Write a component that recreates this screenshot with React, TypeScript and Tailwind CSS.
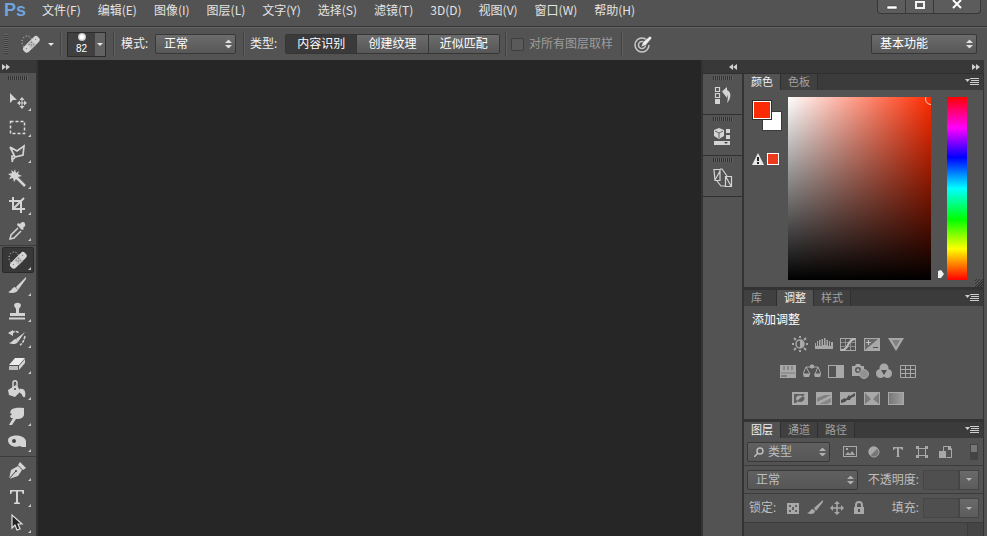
import React, { useState } from 'react';

const menus = ['文件(F)', '编辑(E)', '图像(I)', '图层(L)', '文字(Y)', '选择(S)', '滤镜(T)', '3D(D)', '视图(V)', '窗口(W)', '帮助(H)'];

type Tool = { name: string; icon: React.ReactNode };

// Every tool glyph is drawn on a 20x20 grid
const bandage = (
  <>
    <ellipse cx="7" cy="8" rx="5" ry="6" fill="none" stroke="#e0e0e0" strokeDasharray="1 2" />
    <g transform="rotate(-45 11 10)">
      <rect x="1" y="7" width="20" height="7" rx="3" fill="#d4d4d4" stroke="none" />
      <rect x="8" y="7" width="6" height="7" fill="#bdbdbd" stroke="none" />
      <path d="M9 9h1M12 9h1M10 11h1M12 12h1M4 10h1M17 10h1" stroke="#666" strokeWidth="1" />
    </g>
  </>
);

const brush = (
  <>
    <path d="M19 1 9 11l2 3L19 3z" />
    <path d="M8 11c-3 0-3 4-7 5 3 2 9 1 10-2z" />
  </>
);

const toolGroups: Tool[][] = [
  [
    { name: '移动工具', icon: <><path d="M3 2v10l3-3h4z" /><path d="M15 6l-2.500 3h5zM15 18l-2.500-3h5zM10 12l3-2.500v5zM20 12l-3-2.500v5z" /><path d="M15 8v8M11 12h8" stroke="#d4d4d4" /></> },
    { name: '矩形选框工具', icon: <rect x="3.500" y="4.500" width="14" height="12" fill="none" stroke="#dcdcdc" strokeWidth="1.500" strokeDasharray="3 2" /> },
    { name: '多边形套索工具', icon: <path d="M3 4l7 4 7-5-1 9-8 2-5-10M8 13l-3 0 0 3 3-1M6 16l-1 3" fill="none" stroke="#d4d4d4" strokeWidth="1.700" /> },
    { name: '魔棒工具', icon: <><path d="M8 0l1 4 3-2-1 3 4 2-4 1 1 4-3-2-2 3-1-4-4 1 2-3-3-2 4-1-1-3 3 2z" /><path d="M10 9l8 8" stroke="#d4d4d4" strokeWidth="2.500" /></> },
    { name: '裁剪工具', icon: <path d="M6 2v12h12M2 6h12v12M7 13l10-10" fill="none" stroke="#d4d4d4" strokeWidth="2" /> },
    { name: '吸管工具', icon: <><path d="M13 3c2-3 5-2 5 0 1 2-1 3-2 4l1 1-2 1-5-5 1-2z" /><path d="M11 7l-7 7-1 4 4-1 7-7" fill="none" stroke="#d4d4d4" strokeWidth="1.500" /></> },
  ],
  [
    { name: '污点修复画笔工具', icon: bandage },
    { name: '画笔工具', icon: brush },
    { name: '仿制图章工具', icon: <><path d="M7 3c1-3 6-3 7 0 0 2-2 3-2 4v4h6v3H3v-3h6V7C9 6 7 5 7 3z" /><path d="M2 15.500h16v2H2z" /></> },
    { name: '历史记录画笔工具', icon: <><path d="M18 4L9 11l2 3z" /><path d="M9 11c-3 0-3 3-7 4 3 2 8 1 9-1z" /><path d="M5 5c2-2 5-2 7 0M18 8c-1 5-3 8-5 9" fill="none" stroke="#d4d4d4" strokeWidth="1.500" strokeDasharray="3 1" /><path d="M1 5l5-3v6z" /></> },
    { name: '橡皮擦工具', icon: <><path d="M2 11l6-7h10l-6 7z" fill="#ececec" /><path d="M2 12h9v4H2z" fill="#bdbdbd" /><path d="M12 12l6-7v4l-6 7z" fill="#d4d4d4" /></> },
    { name: '油漆桶工具', icon: <><path d="M1 10l8-5 5 6-6 6-6-2zM13 9c5-1 6 4 5 8-3 1-2-3-5-4z" /><path d="M6 9V3c0-3 4-3 4 0v5" fill="none" stroke="#d4d4d4" strokeWidth="1.500" /><circle cx="8" cy="9" r="1" fill="#444" /></> },
    { name: '涂抹工具', icon: <path d="M4 4c4-3 9-2 13-2v7c-1 4-5 4-8 4l-4 6H2l4-7H4l-1-2 2-2-2-1z" /> },
    { name: '减淡工具', icon: <><path d="M1 8C2 2 17 2 19 9v6h-4l-2-1C8 16 1 14 1 8z" /><circle cx="7" cy="9" r="2" fill="#444" /></> },
  ],
  [
    { name: '钢笔工具', icon: <><path d="M2 18l2-9 7-4 4 4-4 6z" /><path d="M11 4l2-3 6 6-3 2z" /><path d="M2 18l7-8" stroke="#454545" /><circle cx="9" cy="10" r="1" fill="#454545" /></> },
    { name: '横排文字工具', icon: <path d="M3 3h14v4h-1.200l-1-2.500H11V15l2 1v1H7v-1l2-1V4.500H5.200L4.200 7H3z" /> },
    { name: '路径选择工具', icon: <path d="M5 2v13l3-3 2 5 3-1-2-5h4z" fill="#222" stroke="#e0e0e0" strokeWidth="1.200" /> },
  ],
];

const g = '#a8a8a8';
const adjustRows: Tool[][] = [
  [
    { name: '亮度/对比度', icon: <><circle cx="9" cy="8" r="4" fill="none" stroke={g} strokeWidth="1.500" /><path d="M9 4a4 4 0 0 1 0 8z" /><path d="M9 0v2M9 14v2M1 8h2M15 8h2M3 2l2 2M13 12l2 2M15 2l-2 2M5 12l-2 2" stroke={g} strokeWidth="2" /></> },
    { name: '色阶', icon: <path d="M0 13V7h1v3h1V5h1v5h1V4h1.500v6h1V3H8v6h1V2h1.500v7h1V4H13v6h1V5h1v5h1V6h2v7z" /> },
    { name: '曲线', icon: <><rect x="1.500" y="2.500" width="15" height="12" fill="none" stroke={g} /><path d="M1 6.500h16M1 10.500h16M6.500 2v13M11.500 2v13" stroke={g} opacity=".7" /><path d="M2 14c9 0 5-10 14-11" fill="none" stroke="#bcbcbc" strokeWidth="2" /></> },
    { name: '曝光度', icon: <><rect x="1" y="2" width="16" height="13" /><path d="M2 3h13L2 14z" fill="#686868" /><path d="M3 6.500h5M5.500 4v5" stroke="#c0c0c0" /><path d="M10 11.500h5" stroke="#505050" /></> },
    { name: '自然饱和度', icon: <><path d="M1 2h16L9 15z" /><path d="M5 4h8l-4 7z" fill="#808080" /></> },
  ],
  [
    { name: '色相/饱和度', icon: <><rect x="1" y="2" width="16" height="13" /><path d="M5 3v4M9 3v4M13 3v4" stroke="#666" /><path d="M2 9h14v2H2z" fill="#929292" /><path d="M2 12h6v2H2z" fill="#7c7c7c" /></> },
    { name: '色彩平衡', icon: <><path d="M9 1v5M3 4h12M3 4l-3 7h7zM15 4l-3 7h6z" fill="none" stroke={g} /><path d="M0 11h7l-1 3H1zM11 11h7l-1 3h-5zM7 2h4v3H7z" /></> },
    { name: '黑白', icon: <><rect x="1.500" y="2.500" width="15" height="12" fill="none" stroke={g} /><path d="M9 3h7v12H9z" /></> },
    { name: '照片滤镜', icon: <><path d="M1 3h3l1-2h4l1 2h3v4a5 5 0 0 0-4 6H1z" /><circle cx="7" cy="7" r="3" fill="#555" /><circle cx="7" cy="7" r="1.500" /><circle cx="13" cy="11" r="4.500" fill="#929292" stroke={g} /></> },
    { name: '通道混合器', icon: <><circle cx="9" cy="5" r="4.500" /><circle cx="5.500" cy="10.500" r="4.500" /><circle cx="12.500" cy="10.500" r="4.500" /><path d="M6 7h6l-3 5z" fill="#505050" /></> },
    { name: '颜色查找', icon: <path d="M1.500 2.500h15v12h-15zM1 6.500h16M1 10.500h16M6.500 2v13M11.500 2v13" fill="none" stroke={g} /> },
  ],
  [
    { name: '反相', icon: <><rect x="1" y="2" width="16" height="13" /><path d="M3 13V4h11L5 13z" fill="#606060" /><ellipse cx="9" cy="8.500" rx="4" ry="3" /><path d="M6 11a4 3 0 0 0 6-5z" fill="#606060" /></> },
    { name: '色调分离', icon: <><rect x="1" y="2" width="16" height="13" /><path d="M2 8l8-3h6l-14 7z" fill="#808080" /><path d="M4 14l12-6v4l-3 2z" fill="#868686" /></> },
    { name: '阈值', icon: <><rect x="1" y="2" width="16" height="13" /><path d="M2 10l4-2 1 1 3-4 1 1 5-3v3l-4 2-1 2-3 0-2 2-4 1z" fill="#4e4e4e" /></> },
    { name: '可选颜色', icon: <><rect x="1" y="2" width="16" height="13" /><path d="M2 3v11l6-5zM16 3v11l-6-5z" fill="#7a7a7a" /></> },
    { name: '渐变映射', icon: <><rect x="1.500" y="2.500" width="15" height="12" fill="url(#mapGradient)" stroke={g} /></> },
  ],
];

const filters: Tool[] = [
  { name: '像素图层', icon: <><rect x="2.500" y="2.500" width="13" height="10" fill="none" stroke={g} /><path d="M4 11l3-3 2 2 2-3 3 4zM5 4h2v2H5z" /></> },
  { name: '调整图层', icon: <><circle cx="9" cy="8" r="5" fill="#777" stroke={g} strokeWidth="1" /><path d="M12.500 4.500A5 5 0 1 0 5.500 11.500z" /></> },
  { name: '文字图层', icon: <path d="M4 3h10v3h-1l-1-1.500h-2V12l1 1H7l1-1V4.500H6L5 6H4z" /> },
  { name: '形状图层', icon: <><rect x="5.500" y="4.500" width="7" height="7" fill="none" stroke={g} /><path d="M3 2h3v3H3zM12 2h3v3h-3zM3 11h3v3H3zM12 11h3v3h-3z" /></> },
  { name: '智能对象', icon: <><path d="M6.500 8V2.500h6l2 2v9h-5" fill="none" stroke={g} /><path d="M2 7h7v7H2zM11 2h3v4h-3z" /></> },
];

const locks: Tool[] = [
  { name: '锁定透明像素', icon: <><rect x="3" y="3" width="12" height="11" /><path d="M5 5h2v2H5zM11 5h2v2h-2zM8 7h2v3H8zM5 10h2v2H5zM11 10h2v2h-2z" fill="#606060" /></> },
  { name: '锁定图像像素', icon: <><path d="M17 0L8 8l2 3L17 2z" /><path d="M7 9c-3 0-2 3-6 4 4 2 8 1 8-2z" /></> },
  { name: '锁定位置', icon: <><path d="M9 2v12M3 8h12" stroke={g} strokeWidth="1.500" /><path d="M9 1L6 4h6zM9 15l-3-3h6zM2 8l3-3v6zM16 8l-3-3v6z" /></> },
  { name: '锁定全部', icon: <><path d="M4 7h10v7H4z" /><path d="M6 7V5c0-4 6-4 6 0v2" fill="none" stroke={g} strokeWidth="2" /><path d="M8 9h2v3H8z" fill="#505050" /></> },
];

const dockIcons: Tool[] = [
  { name: '历史记录', icon: <><path d="M2.500 1.500h4v4h-4zM2.500 7.500h4v4h-4z" fill="none" stroke="#d4d4d4" strokeWidth="1.200" /><path d="M2 13h5v5H2z" /><path d="M9 5.500L14 1v3c5 2 4 9 0 13 1-4 1-7 0-8v3z" /></> },
  { name: '属性', icon: <><path d="M6 1l5 2v6l-5 3-5-3V3z" /><path d="M2 4l4 2 4-2M6 6v5" fill="none" stroke="#606060" /><path d="M13 2h4v4h-4zM13 8h4v4h-4zM1 14h16v4H1z" /><path d="M11 15h4l-2 2z" fill="#444" /></> },
  { name: '库', icon: <path d="M1 1.500h6v11H2zM12.500 8.500h6v10h-6zM2 12L7 3M13 9l5 9M7 1l2 0 5 7M4 13l4 5h5" fill="none" stroke="#d4d4d4" strokeWidth="1.200" /> },
];

const Grip = () => <div className="h-1 w-5 bg-[repeating-linear-gradient(90deg,#303030_0_1px,#626262_1px_2px)]" />;

const Divider = () => <div className="h-6 w-0.5 border-l border-[#414141] bg-[#606060]" />;

const UpDown = ({ className }: { className: string }) => (
  <svg viewBox="0 0 7 9" className={`pointer-events-none absolute top-1/2 right-1 h-[9px] w-[7px] -translate-y-1/2 ${className}`}>
    <path d="M3.500 0L7 3.500H0zM3.500 9L0 5.500h7z" />
  </svg>
);

const Select = ({ label, value, className, dim }: { label: string; value: string; className: string; dim?: boolean }) => (
  <div className={`relative shrink-0 ${className}`}>
    <select
      aria-label={label}
      className={`block h-5 w-full appearance-none rounded-xs border border-[#383838] bg-linear-to-b text-xs leading-4 outline-none ${dim ? 'from-[#606060] to-[#565656] text-[#bebebe]' : 'from-[#6c6c6c] to-[#575757] text-white'} ${dim && value === '类型' ? 'pl-5' : 'pl-2'}`}
    >
      <option>{value}</option>
    </select>
    <UpDown className={dim ? 'fill-[#b0b0b0]' : 'fill-[#e0e0e0]'} />
  </div>
);

const DoubleArrow = ({ left }: { left?: boolean }) => (
  <svg viewBox="0 0 8 6" className="h-1.5 w-2 fill-[#d0d0d0]">
    <path d={left ? 'M4 0v6L0 3zM8 0v6L4 3z' : 'M0 0v6l4-3zM4 0v6l4-3z'} />
  </svg>
);

const PanelTabs = ({ tabs, initial }: { tabs: string[]; initial: string }) => {
  const [active, setActive] = useState(initial);
  return (
    <div className="flex h-4 items-stretch bg-[#3b3b3b]" role="tablist">
      {tabs.map((tab) => (
        <button
          key={tab}
          type="button"
          role="tab"
          aria-selected={tab === active}
          onClick={() => setActive(tab)}
          className={`border-r border-[#2f2f2f] px-[7px] text-[11px] leading-4 ${tab === '库' ? 'pr-[14px]' : ''} ${tab === active ? 'bg-[#535353] text-[#f0f0f0]' : 'bg-[#404040] text-[#a0a0a0]'}`}
        >
          {tab}
        </button>
      ))}
      <button type="button" aria-label="面板菜单" className="mr-1 ml-auto">
        <svg viewBox="0 0 14 8" className="h-2 w-3.5 fill-[#cfcfcf]">
          <path d="M0 1h5L2.500 4zM5 0h9v1H5zM6 2h8v1H6zM5 4h9v1H5zM5 6h9v1H5z" />
        </svg>
      </button>
    </div>
  );
};

const ToolButton = ({ tool, active, onClick }: { tool: Tool; active: boolean; onClick: () => void }) => (
  <button
    type="button"
    aria-label={tool.name}
    aria-pressed={active}
    onClick={onClick}
    className={`relative ml-0.5 flex h-[26px] w-8 shrink-0 items-center rounded-xs border pl-1 ${active ? 'border-[#2a2a2a] bg-[#383838]' : 'border-transparent'}`}
  >
    <svg viewBox="0 0 20 20" className="size-5 fill-[#d4d4d4]">{tool.icon}</svg>
    <svg viewBox="0 0 3 3" className="absolute right-0.5 bottom-0.5 size-[3px] fill-[#c8c8c8]"><path d="M3 0v3H0z" /></svg>
  </button>
);

const SmallIcon = ({ tool, className = 'w-6' }: { tool: Tool; className?: string }) => (
  <button type="button" aria-label={tool.name} className={`flex justify-center ${className}`}>
    <svg viewBox="0 0 18 16" className="h-4 w-[18px] fill-[#a8a8a8]">{tool.icon}</svg>
  </button>
);

const PercentField = ({ label }: { label: string }) => (
  <div className="ml-auto flex items-center">
    <label htmlFor={label} className="mr-1 text-xs leading-4 text-[#bebebe]">{label}:</label>
    <input id={label} className="h-5 w-9 border border-[#464646] bg-[#4f4f4f] px-1 text-xs" />
    <button type="button" aria-label={`${label}选项`} className="flex h-5 w-5 items-center justify-center border border-[#444] bg-linear-to-b from-[#6a6a6a] to-[#5c5c5c]">
      <svg viewBox="0 0 6 3" className="h-[3px] w-1.5 fill-[#b8b8b8]"><path d="M0 0h6L3 3z" /></svg>
    </button>
  </div>
);

const OptionsBar = () => {
  const [mode, setMode] = useState('内容识别');
  return (
    <div className="flex h-[33px] shrink-0 items-center border-t border-[#666] pr-[10px] pl-1">
      <div className="h-5 w-1 bg-[repeating-linear-gradient(0deg,#3c3c3c_0_1px,#666_1px_2px)]" />
      <button type="button" aria-label="工具预设" className="ml-3 flex items-center gap-2">
        <svg viewBox="0 0 20 20" className="size-5 fill-[#d4d4d4]">{bandage}</svg>
        <svg viewBox="0 0 6 3" className="h-[3px] w-1.5 fill-[#e8e8e8]"><path d="M0 0h6L3 3z" /></svg>
      </button>
      <div className="ml-1.5"><Divider /></div>
      <button type="button" aria-label="画笔大小" className="ml-[5px] flex h-[25px] w-[39px] border border-[#2c2c2c] bg-[#404040]">
        <span className="flex flex-1 flex-col items-center">
          <span className="size-2 rounded-full bg-[radial-gradient(circle,#fff_30%,#888_100%)]" />
          <span className="mt-0.5 font-['Liberation_Sans'] text-[10px] leading-3 text-white">82</span>
        </span>
        <span className="flex h-full w-2.5 items-center justify-center bg-[#626262]">
          <svg viewBox="0 0 6 3" className="h-[3px] w-1.5 fill-[#e8e8e8]"><path d="M0 0h6L3 3z" /></svg>
        </span>
      </button>
      <div className="ml-[7px]"><Divider /></div>
      <span className="ml-1.5 w-[34px] text-xs text-[#f0f0f0]">模式:</span>
      <Select label="模式" value="正常" className="w-[81px]" />
      <div className="ml-[7px]"><Divider /></div>
      <span className="ml-[5px] w-[35px] text-xs text-[#f0f0f0]">类型:</span>
      <div className="flex h-5 w-[215px] divide-x divide-[#363636] overflow-hidden rounded-xs border border-[#363636]">
        {['内容识别', '创建纹理', '近似匹配'].map((item) => (
          <button
            key={item}
            type="button"
            aria-pressed={mode === item}
            onClick={() => setMode(item)}
            className={`flex-1 text-xs leading-4 text-white ${mode === item ? 'bg-[#3a3a3a]' : 'bg-linear-to-b from-[#6c6c6c] to-[#575757]'}`}
          >
            {item}
          </button>
        ))}
      </div>
      <div className="ml-[5px]"><Divider /></div>
      <label className="ml-1 flex items-center gap-[5px] text-xs text-[#9c9c9c]">
        <input type="checkbox" className="size-[13px] appearance-none rounded-xs border border-[#3e3e3e] bg-[#5a5a5a]" />
        对所有图层取样
      </label>
      <div className="ml-2"><Divider /></div>
      <button type="button" aria-label="压力控制" className="ml-[10px]">
        <svg viewBox="0 0 20 20" className="size-5">
          <circle cx="9" cy="11" r="7" fill="none" stroke="#c8c8c8" strokeWidth="1.500" strokeDasharray="38 6" />
          <circle cx="9" cy="11" r="3.500" fill="none" stroke="#c8c8c8" strokeWidth="1.500" />
          <path d="M8 13l2-5 7-6 2 2-6 7z" fill="#eee" stroke="#444" strokeWidth=".5" />
        </svg>
      </button>
      <Select label="工作区" value="基本功能" className="ml-auto w-[106px]" />
    </div>
  );
};

const ColorPanel = () => (
  <section>
    <PanelTabs tabs={['颜色', '色板']} initial="颜色" />
    <div className="relative flex h-[197px] pt-[7px] pr-4 pl-2">
      <div className="w-9">
        <div className="relative mt-[3px] h-8">
          <div className="absolute top-[11px] left-[10px] size-5 border border-[#3b3b3b] bg-white" />
          <button type="button" aria-label="前景色" className="absolute top-0 left-0 size-5 border border-[#2d2d2d] bg-[#fb2b05] ring-1 ring-white ring-inset" />
        </div>
        <div className="mt-[21px] flex items-center gap-[3px]">
          <svg viewBox="0 0 12 12" className="size-3"><path d="M6 0l6 12H0z" fill="#e8e8e8" /><path d="M5 4h2v4H5zM5 9h2v2H5z" fill="#222" /></svg>
          <button type="button" aria-label="溢色校正" className="size-3 border border-white bg-[#ec3a1c]" />
        </div>
      </div>
      <div className="relative h-[183px] flex-1 overflow-hidden bg-[linear-gradient(to_top,#000,transparent),linear-gradient(to_right,#fff,#ff2b00)]">
        <div className="absolute -top-1 -right-1.5 size-3 rounded-full border border-[#f0d0c8]" />
      </div>
      <div className="flex h-[183px] w-4 items-end justify-center pb-0.5">
        <svg viewBox="0 0 6 8" className="ml-1 h-2 w-1.5 fill-[#f0f0f0]"><path d="M0 1l3-1 3 4-3 4H0z" /></svg>
      </div>
      <div className="h-[183px] w-5 bg-[linear-gradient(to_bottom,#f00,#f0f_17%,#00f_33%,#0ff_50%,#0f0_67%,#ff0_83%,#f00)]" />
      <div className="absolute right-0 bottom-0 size-2 bg-[repeating-linear-gradient(135deg,#555_0_1px,#303030_1px_2px)]" />
    </div>
  </section>
);

const App: React.FC = () => {
  const [tool, setTool] = useState('污点修复画笔工具');

  return (
    <div className="flex h-screen flex-col overflow-hidden bg-[#535353] font-['Open_Sans','Noto_Sans_CJK_SC',sans-serif] text-xs text-[#e4e4e4]">
      {/* Menu bar */}
      <header className="flex h-[27px] shrink-0 items-start border-b border-[#333] pl-1">
        <div className="w-[38px] font-['Liberation_Sans'] text-lg leading-[21px] font-bold text-[#6fa3db]">Ps</div>
        <nav className="flex gap-[17px] pt-px font-['Noto_Sans_CJK_SC',sans-serif]">
          {menus.map((item) => (
            <button key={item} type="button" className="text-xs leading-[18px] whitespace-nowrap">{item}</button>
          ))}
        </nav>
        <div className="mr-1.5 ml-auto flex h-3.5 divide-x divide-[#383838] rounded-b border border-t-0 border-[#383838] bg-[#5c5c5c]">
          <button type="button" aria-label="最小化" className="flex w-7 justify-center">
            <svg viewBox="0 0 12 12" className="size-3"><path d="M1 6h10v3H1z" fill="#fff" stroke="#333" strokeWidth=".5" /></svg>
          </button>
          <button type="button" aria-label="最大化" className="flex w-7 justify-center">
            <svg viewBox="0 0 12 12" className="size-3"><path d="M2 2h8v6H2z" fill="none" stroke="#f4f4f4" strokeWidth="2" /></svg>
          </button>
          <button type="button" aria-label="关闭" className="flex w-[46px] justify-center">
            <svg viewBox="0 0 12 12" className="size-3"><path d="M2 0l8 8M10 0L2 8" stroke="#fff" strokeWidth="2" /></svg>
          </button>
        </div>
      </header>

      <OptionsBar />

      <div className="flex min-h-0 flex-1 pr-[3px]">
        {/* Tools */}
        <aside className="flex w-[38px] shrink-0 flex-col border-r-2 border-[#333]">
          <div className="flex h-[13px] shrink-0 items-center bg-[#383838] pl-0.5"><DoubleArrow /></div>
          <div className="flex h-[15px] shrink-0 justify-center pt-[3px]"><Grip /></div>
          {toolGroups.map((group, i) => (
            <div key={i} className={`flex shrink-0 flex-col ${i > 0 ? 'mt-px border-t border-[#3c3c3c] pt-px' : ''}`}>
              {group.map((item) => (
                <ToolButton key={item.name} tool={item} active={item.name === tool} onClick={() => setTool(item.name)} />
              ))}
            </div>
          ))}
        </aside>

        <main className="flex-1 bg-[#262626]" />

        <div className="flex w-[283px] shrink-0 flex-col border-l-2 border-[#333]">
          <div className="flex h-[14px] shrink-0 items-center justify-between border-b border-[#2f2f2f] bg-[#383838] pr-1 pl-[26px]">
            <DoubleArrow left />
            <DoubleArrow />
          </div>
          <div className="flex min-h-0 flex-1">
            {/* Collapsed panels */}
            <div className="w-[41px] shrink-0 border-r-2 border-[#333]">
              {dockIcons.map((item) => (
                <div key={item.name} className="flex h-[41px] flex-col items-center border-b border-[#303030] pt-0.5">
                  <Grip />
                  <button type="button" aria-label={item.name} className="mt-1.5">
                    <svg viewBox="0 0 20 20" className="size-5 fill-[#d4d4d4]">{item.icon}</svg>
                  </button>
                </div>
              ))}
            </div>

            <div className="flex min-w-0 flex-1 flex-col gap-[3px] border-r border-[#333] bg-[#333]">
              <div className="bg-[#535353]"><ColorPanel /></div>

              <section className="bg-[#535353]">
                <PanelTabs tabs={['库', '调整', '样式']} initial="调整" />
                <div className="h-[113px] pt-1.5">
                  <h2 className="pl-2 text-xs leading-4 text-white">添加调整</h2>
                  <div className="mt-2 flex flex-col gap-[11px] pr-8">
                    {adjustRows.map((row, i) => (
                      <div key={i} className="flex justify-center">
                        {row.map((item) => <SmallIcon key={item.name} tool={item} />)}
                      </div>
                    ))}
                  </div>
                </div>
              </section>

              <section className="flex flex-1 flex-col bg-[#535353]">
                <PanelTabs tabs={['图层', '通道', '路径']} initial="图层" />
                <div className="flex h-7 shrink-0 items-center border-b border-[#3c3c3c] pr-1 pl-[3px]">
                  <div className="relative">
                    <Select label="滤镜类型" value="类型" className="w-[83px]" dim />
                    <svg viewBox="0 0 10 10" className="pointer-events-none absolute top-[5px] left-[7px] size-2.5">
                      <circle cx="6" cy="4" r="3" fill="none" stroke="#bebebe" strokeWidth="1.500" /><path d="M4 6L0 10" stroke="#bebebe" strokeWidth="1.500" />
                    </svg>
                  </div>
                  <div className="ml-2 flex">{filters.map((item) => <SmallIcon key={item.name} tool={item} />)}</div>
                  <button type="button" aria-label="图层过滤开关" className="mr-px ml-auto h-4 w-2 border border-[#444] bg-linear-to-b from-[#777] from-50% to-[#444] to-50%" />
                </div>
                <div className="flex h-7 shrink-0 items-center border-b border-[#3c3c3c] pr-1 pl-[3px]">
                  <Select label="混合模式" value="正常" className="w-[111px]" dim />
                  <PercentField label="不透明度" />
                </div>
                <div className="flex h-[29px] shrink-0 items-center border-b border-[#3c3c3c] pr-1 pl-[5px]">
                  <span className="text-xs leading-4 text-[#bebebe]">锁定:</span>
                  <div className="ml-1.5 flex">{locks.map((item) => <SmallIcon key={item.name} tool={item} className="w-[22px]" />)}</div>
                  <PercentField label="填充" />
                </div>
                <div className="flex flex-1 bg-[#494949]"><div className="ml-auto w-4 border-l border-[#3c3c3c] bg-[#454545]" /></div>
              </section>
            </div>
          </div>
        </div>
      </div>
      <svg className="absolute size-0">
        <defs>
          <linearGradient id="mapGradient"><stop offset="0" stopColor="#777" /><stop offset="1" stopColor="#a0a0a0" /></linearGradient>
        </defs>
      </svg>
    </div>
  );
};

export default App;
